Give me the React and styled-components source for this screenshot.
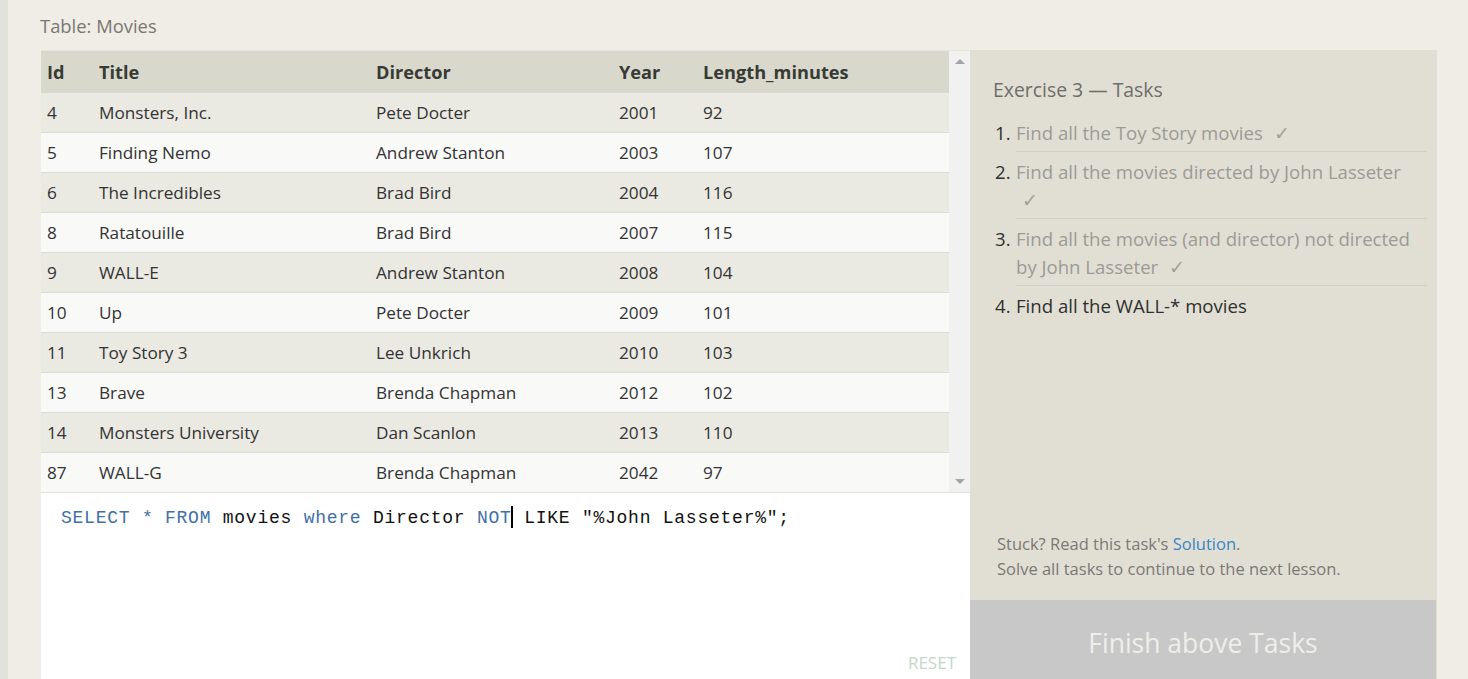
import styled, { createGlobalStyle } from 'styled-components';

const GlobalStyle = createGlobalStyle`
  html, body {
    margin: 0;
    padding: 0;
    background: #efede6;
    font-family: 'Open Sans', 'Noto Sans', sans-serif;
    overflow: hidden;
  }
`;

const movies = [
  [4, 'Monsters, Inc.', 'Pete Docter', 2001, 92],
  [5, 'Finding Nemo', 'Andrew Stanton', 2003, 107],
  [6, 'The Incredibles', 'Brad Bird', 2004, 116],
  [8, 'Ratatouille', 'Brad Bird', 2007, 115],
  [9, 'WALL-E', 'Andrew Stanton', 2008, 104],
  [10, 'Up', 'Pete Docter', 2009, 101],
  [11, 'Toy Story 3', 'Lee Unkrich', 2010, 103],
  [13, 'Brave', 'Brenda Chapman', 2012, 102],
  [14, 'Monsters University', 'Dan Scanlon', 2013, 110],
  [87, 'WALL-G', 'Brenda Chapman', 2042, 97],
];

const tasks = [
  { text: 'Find all the Toy Story movies', done: true },
  { text: 'Find all the movies directed by John Lasseter', done: true },
  { text: 'Find all the movies (and director) not directed by John Lasseter', done: true },
  { text: 'Find all the WALL-* movies', done: false },
];

const App = () => (
  <>
    <GlobalStyle />
    <Page>
      <Strip />
      <Main>
        <Caption>Table: Movies</Caption>
        <Workspace>
          <LeftCol>
            <TableWrap>
              <Table>
                <colgroup>
                  <col style={{ width: 52 }} />
                  <col style={{ width: 277 }} />
                  <col style={{ width: 243 }} />
                  <col style={{ width: 84 }} />
                  <col />
                </colgroup>
                <thead>
                  <tr>
                    <th>Id</th>
                    <th>Title</th>
                    <th>Director</th>
                    <th>Year</th>
                    <th>Length_minutes</th>
                  </tr>
                </thead>
                <tbody>
                  {movies.map((m, i) => (
                    <Row key={m[0]} $odd={i % 2 === 1}>
                      {m.map((c, j) => (
                        <td key={j}>{c}</td>
                      ))}
                    </Row>
                  ))}
                </tbody>
              </Table>
              <Scrollbar>
                <Arrow $up />
                <Arrow />
              </Scrollbar>
            </TableWrap>
            <Editor>
              <Code>
                <Kw>SELECT</Kw> <Kw>*</Kw> <Kw>FROM</Kw> movies <Kw>where</Kw> Director <Kw>NOT</Kw>
                <Caret />
                {' LIKE "%John Lasseter%";'}
              </Code>
              <Reset>RESET</Reset>
            </Editor>
          </LeftCol>
          <Panel>
            <TasksArea>
              <PanelTitle>Exercise 3 — Tasks</PanelTitle>
              <TaskList>
                {tasks.map((t, i) => (
                  <Task key={i} $last={i === tasks.length - 1}>
                    <Num>{i + 1}.</Num>
                    <TaskText $done={t.done}>
                      {t.text}
                      {t.done && ' '}
                      {t.done && <Check>✓</Check>}
                    </TaskText>
                  </Task>
                ))}
              </TaskList>
            </TasksArea>
            <Help>
              <div>
                Stuck? Read this task's <SolutionLink>Solution</SolutionLink>.
              </div>
              <div>Solve all tasks to continue to the next lesson.</div>
            </Help>
            <FinishButton>Finish above Tasks</FinishButton>
          </Panel>
        </Workspace>
      </Main>
    </Page>
  </>
);

const Page = styled.div`
  display: flex;
  height: 679px;
  overflow: hidden;
`;

const Strip = styled.div`
  width: 8px;
  flex-shrink: 0;
  background: #e3e1dc;
`;

const Main = styled.div`
  flex: 1;
  padding-left: 33px;
  display: flex;
  flex-direction: column;
`;

const Caption = styled.div`
  height: 50px;
  line-height: 52px;
  font-size: 18.4px;
  color: #7a7772;
  margin-left: -1px;
`;

const Workspace = styled.div`
  flex: 1;
  display: flex;
`;

const LeftCol = styled.div`
  width: 929px;
  display: flex;
  flex-direction: column;
`;

const TableWrap = styled.div`
  display: flex;
  height: 442px;
  border-top: 1px solid #e6e5dd;
  box-sizing: border-box;
`;

const Table = styled.table`
  width: 908px;
  border-collapse: collapse;
  table-layout: fixed;
  color: #333;
  font-size: 17.2px;

  th {
    height: 42px;
    padding: 0 6px;
    text-align: left;
    font-weight: 700;
    font-size: 18.2px;
    color: #383a34;
    background: #d9d8cc;
  }
  td {
    height: 39px;
    padding: 0 6px;
    border-bottom: 1px solid #dcdcd5;
  }
`;

const Row = styled.tr`
  background: ${(p) => (p.$odd ? '#f9f9f8' : '#eae9e2')};
`;

const Scrollbar = styled.div`
  width: 21px;
  background: #f1f1f1;
  display: flex;
  flex-direction: column;
  justify-content: space-between;
  align-items: center;
  padding: 8px 0;
`;

const Arrow = styled.div`
  width: 0;
  height: 0;
  border-left: 5px solid transparent;
  border-right: 5px solid transparent;
  ${(p) =>
    p.$up ? 'border-bottom: 5px solid #a3a3a3;' : 'border-top: 5px solid #a3a3a3;'}
`;

const Editor = styled.div`
  flex: 1;
  background: #fff;
  border-top: 1px solid #e2e2dc;
  position: relative;
  padding: 12px 20px;
`;

const Code = styled.div`
  font-family: 'Liberation Mono', 'DejaVu Sans Mono', monospace;
  font-size: 18px;
  letter-spacing: 0.75px;
  color: #111;
  line-height: 26px;
  white-space: pre;
`;

const Kw = styled.span`
  color: #3f70a8;
`;

const Caret = styled.span`
  display: inline-block;
  width: 2px;
  height: 22px;
  background: #000;
  vertical-align: -5px;
  margin-left: -1px;
`;

const Reset = styled.div`
  position: absolute;
  right: 14px;
  bottom: 5px;
  font-size: 17px;
  color: #c4d6ca;
`;

const Panel = styled.div`
  width: 467px;
  background: #e1dfd4;
  display: flex;
  flex-direction: column;
`;

const TasksArea = styled.div`
  flex: 1;
  padding: 26px 10px 0 23px;
`;

const PanelTitle = styled.div`
  font-size: 19.4px;
  color: #6f6d6a;
  line-height: 28px;
  margin-bottom: 15px;
`;

const TaskList = styled.div`
  display: flex;
  flex-direction: column;
`;

const Task = styled.div`
  font-size: 18.6px;
  line-height: 28px;
  padding: 0 0 4px;
  margin-bottom: 6px;
  border-bottom: ${(p) => (p.$last ? 'none' : '1px solid #d2d0c6')};
  margin-left: 23px;
  position: relative;
`;

const Num = styled.span`
  position: absolute;
  left: -21px;
  color: #2f2f2f;
`;

const TaskText = styled.span`
  color: ${(p) => (p.$done ? '#9c9a96' : '#2f2f2f')};
`;

const Check = styled.span`
  margin-left: 6px;
  color: #a19f9a;
`;

const Help = styled.div`
  padding: 0 20px 19px 27px;
  font-size: 16.5px;
  line-height: 25px;
  color: #7c7874;
`;

const SolutionLink = styled.span`
  color: #3a85c4;
`;

const FinishButton = styled.div`
  height: 79px;
  margin-right: 1px;
  background: #c8c8c8;
  color: #efefea;
  font-size: 26.5px;
  display: flex;
  align-items: center;
  justify-content: center;
  padding-top: 10px;
  padding-bottom: 4px;
  box-sizing: border-box;
`;

export default App;
